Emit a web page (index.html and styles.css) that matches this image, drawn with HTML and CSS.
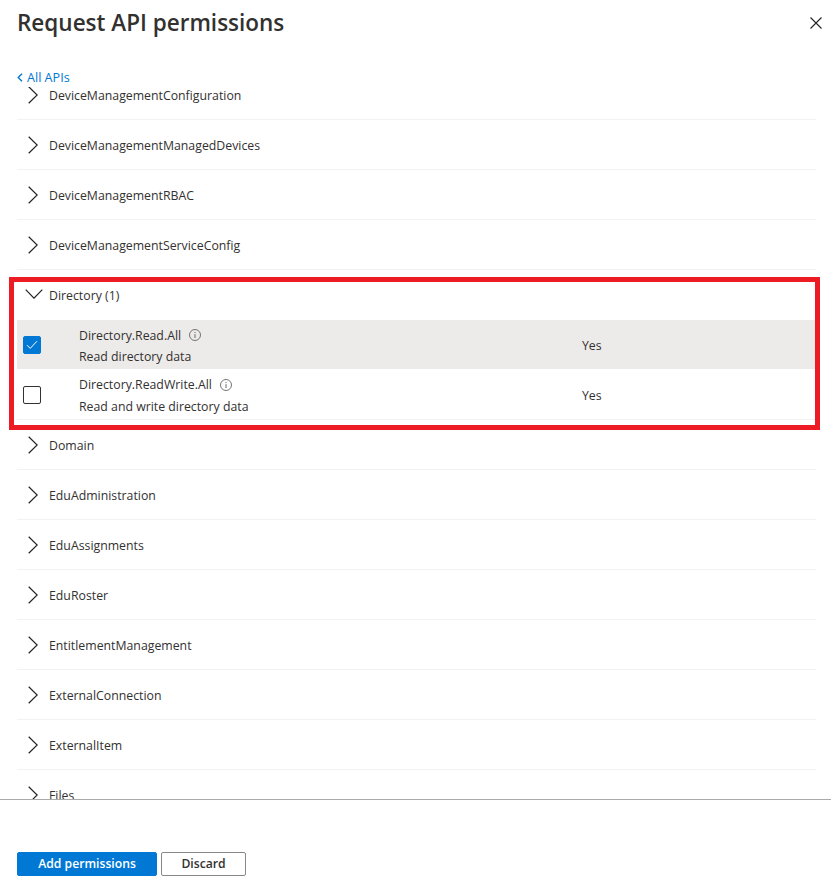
FILE: index.html
```html
<!DOCTYPE html>
<html lang="en">
<head>
<meta charset="UTF-8">
<title>Request API permissions</title>
<link rel="stylesheet" href="styles.css">
</head>
<body>
<svg class="icon-defs" width="0" height="0">
  <symbol id="chevron-right" viewBox="0 0 10 18"><path d="M0.7 0.7 L9.2 9 L0.7 17.3" fill="none" stroke="#222" stroke-width="1.2"/></symbol>
  <symbol id="chevron-down" viewBox="0 0 18 10"><path d="M0.7 0.7 L9 9.2 L17.3 0.7" fill="none" stroke="#222" stroke-width="1.2"/></symbol>
  <symbol id="info" viewBox="0 0 12 12"><circle cx="6" cy="6" r="5.5" fill="none" stroke="#666" stroke-width="0.9"/><path d="M6 5.2 V9 M6 3 V4.1" stroke="#666" stroke-width="1"/></symbol>
</svg>
<div class="panel">
  <header class="panel-header">
    <div class="title-row">
      <h1>Request API permissions</h1>
      <button class="close" aria-label="Close">
        <svg width="12" height="12" viewBox="0 0 12 12"><path d="M0.5 0.5 L11.5 11.5 M11.5 0.5 L0.5 11.5" stroke="#222" stroke-width="1.1"/></svg>
      </button>
    </div>
    <a class="back" href="#">
      <svg width="6" height="9" viewBox="0 0 6 9"><path d="M5 0.7 L1.2 4.5 L5 8.3" fill="none" stroke="#0078d4" stroke-width="1.4"/></svg>
      All APIs
    </a>
  </header>

  <div class="list-wrap">
    <div class="list">
      <div class="row"><svg class="chev"><use href="#chevron-right"/></svg>DeviceManagementConfiguration</div>
      <div class="row"><svg class="chev"><use href="#chevron-right"/></svg>DeviceManagementManagedDevices</div>
      <div class="row"><svg class="chev"><use href="#chevron-right"/></svg>DeviceManagementRBAC</div>
      <div class="row"><svg class="chev"><use href="#chevron-right"/></svg>DeviceManagementServiceConfig</div>

      <div class="row row-open"><svg class="chev-down"><use href="#chevron-down"/></svg>Directory (1)</div>
      <div class="perm selected">
        <span class="check checked">
          <svg width="12" height="10" viewBox="0 0 12 10"><path d="M1 5.2 L4.2 8.4 L11 1.2" fill="none" stroke="#fff" stroke-width="1"/></svg>
        </span>
        <div class="perm-text">
          <div class="perm-name">Directory.Read.All <svg class="info"><use href="#info"/></svg></div>
          <div class="perm-desc">Read directory data</div>
        </div>
        <div class="perm-admin">Yes</div>
      </div>
      <div class="perm last">
        <span class="check"></span>
        <div class="perm-text">
          <div class="perm-name">Directory.ReadWrite.All <svg class="info"><use href="#info"/></svg></div>
          <div class="perm-desc">Read and write directory data</div>
        </div>
        <div class="perm-admin">Yes</div>
      </div>

      <div class="row"><svg class="chev"><use href="#chevron-right"/></svg>Domain</div>
      <div class="row"><svg class="chev"><use href="#chevron-right"/></svg>EduAdministration</div>
      <div class="row"><svg class="chev"><use href="#chevron-right"/></svg>EduAssignments</div>
      <div class="row"><svg class="chev"><use href="#chevron-right"/></svg>EduRoster</div>
      <div class="row"><svg class="chev"><use href="#chevron-right"/></svg>EntitlementManagement</div>
      <div class="row"><svg class="chev"><use href="#chevron-right"/></svg>ExternalConnection</div>
      <div class="row"><svg class="chev"><use href="#chevron-right"/></svg>ExternalItem</div>
      <div class="row"><svg class="chev"><use href="#chevron-right"/></svg>Files</div>
    </div>
    <div class="highlight"></div>
  </div>

  <footer class="panel-footer">
    <button class="btn primary">Add permissions</button>
    <button class="btn">Discard</button>
  </footer>
</div>
</body>
</html>
```

FILE: styles.css
```css
* {
  box-sizing: border-box;
}

html,
body {
  margin: 0;
  height: 100%;
  background: #fff;
  color: #323130;
  font-family: "Open Sans", sans-serif;
  font-size: 12.3px;
}

.icon-defs {
  display: block;
  height: 0;
}

.panel {
  display: flex;
  flex-direction: column;
  height: 889px;
}

/* HEADER */
.panel-header {
  height: 87px;
  padding: 0 9px 0 17px;
  flex-shrink: 0;
}

.title-row {
  display: flex;
  justify-content: space-between;
  align-items: center;
  height: 45px;
}

.title-row h1 {
  margin: 0;
  font-size: 22.5px;
  font-weight: 600;
  color: #323130;
}

.close {
  display: flex;
  padding: 0;
  border: 0;
  background: none;
}

.back {
  display: flex;
  align-items: center;
  gap: 4px;
  height: 18px;
  margin-top: 23px;
  font-size: 12.6px;
  color: #0078d4;
  text-decoration: none;
}

/* LIST */
.list-wrap {
  position: relative;
  flex: 1;
  overflow: hidden;
}

.list {
  margin: -17px 15px 0 17px;
}

.row {
  display: flex;
  align-items: center;
  height: 50px;
  padding: 2px 0 0 11px;
  border-bottom: 1px solid #f3f2f1;
}

.chev {
  width: 10px;
  height: 18px;
  margin: -2px 11px 0 0;
}

.row-open {
  padding: 0 0 0 8px;
  border-bottom: 0;
}

.chev-down {
  width: 18px;
  height: 10px;
  margin: -2px 6px 0 0;
}

.perm {
  display: flex;
  align-items: center;
  height: 50px;
  padding-top: 2px;
}

.perm.selected {
  background: #edebe9;
  height: 49px;
  margin-bottom: 1px;
}

.perm.last {
  border-bottom: 1px solid #f3f2f1;
}

.check {
  display: flex;
  align-items: center;
  justify-content: center;
  width: 18px;
  height: 18px;
  margin: -2px 0 0 6px;
  border: 1px solid #323130;
  border-radius: 2px;
  flex-shrink: 0;
}

.check.checked {
  background: #0078d4;
  border-color: #0078d4;
}

.perm-text {
  width: 503px;
  margin-left: 38px;
}

.perm-name {
  display: flex;
  align-items: center;
  gap: 8px;
  height: 21px;
}

.perm.last .perm-name {
  height: 20px;
  margin-bottom: 1px;
}

.perm-desc {
  height: 21px;
  line-height: 21px;
}

.info {
  width: 12px;
  height: 12px;
}

/* RED ANNOTATION */
.highlight {
  position: absolute;
  left: 9px;
  top: 190px;
  width: 811px;
  height: 153px;
  border: 5px solid #ed1c24;
}

/* FOOTER */
.panel-footer {
  display: flex;
  gap: 4px;
  height: 90px;
  flex-shrink: 0;
  padding: 52px 0 0 17px;
  border-top: 1px solid #aaa;
}

.btn {
  width: 85px;
  height: 24px;
  padding: 0 0 2px;
  border: 1px solid #8a8886;
  border-radius: 2px;
  background: #fff;
  color: #323130;
  font-family: inherit;
  font-size: 12.2px;
  font-weight: 600;
}

.btn.primary {
  width: 140px;
  border-color: #0078d4;
  background: #0078d4;
  color: #fff;
}
```
